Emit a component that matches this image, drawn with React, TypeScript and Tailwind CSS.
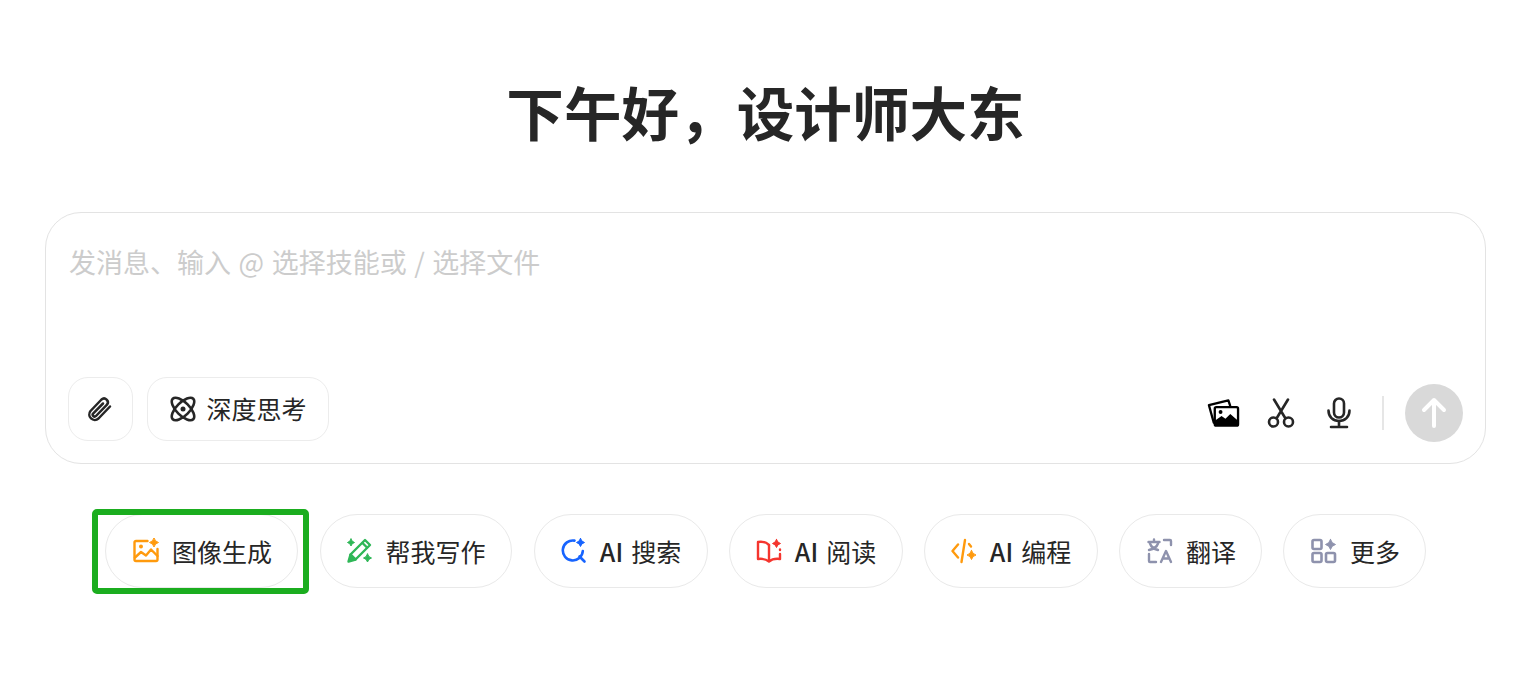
import React from 'react';

const font = { fontFamily: '"Noto Sans CJK SC", "Noto Sans", sans-serif' };

const Spark = ({ x, y, r, fill }: { x: number; y: number; r: number; fill: string }) => (
  <path
    d={`M${x} ${y - r}Q${x + r * 0.2} ${y - r * 0.2} ${x + r} ${y}Q${x + r * 0.2} ${y + r * 0.2} ${x} ${y + r}Q${x - r * 0.2} ${y + r * 0.2} ${x - r} ${y}Q${x - r * 0.2} ${y - r * 0.2} ${x} ${y - r}Z`}
    fill={fill}
    stroke={fill}
    strokeWidth="1"
    strokeLinejoin="round"
  />
);

const ImageIcon = () => (
  <svg width="26" height="26" viewBox="0 0 26 26" fill="none" stroke="#ff9a0d" strokeWidth="2.400" strokeLinecap="round" strokeLinejoin="round">
    <path d="M14.500 3H3a1.500 1.500 0 0 0-1.500 1.500v17A1.500 1.500 0 0 0 3 23h20a1.500 1.500 0 0 0 1.500-1.500V11" />
    <path d="M2 19.500l6-5.500 5 3.500 5-6 6.500 6.500" />
    <circle cx="8" cy="8.500" r="2" fill="#ff9a0d" stroke="none" />
    <Spark x={21} y={4.500} r={4.500} fill="#ff9a0d" />
  </svg>
);

const PenIcon = () => (
  <svg width="26" height="26" viewBox="0 0 26 26" fill="none" stroke="#2fb757" strokeWidth="2.400" strokeLinecap="round" strokeLinejoin="round">
    <path d="M19 2l5 5L9.500 21.500 4.500 16.500z" />
    <path d="M4.500 16.500L2.500 23.500l7-2z" fill="#2fb757" />
    <path d="M16.500 5L21 9.500" />
    <Spark x={5} y={4.500} r={3.500} fill="#2fb757" />
    <Spark x={21.500} y={20} r={4} fill="#2fb757" />
  </svg>
);

const SearchIcon = () => (
  <svg width="26" height="26" viewBox="0 0 26 26" fill="none" stroke="#1764ff" strokeWidth="2.600" strokeLinecap="round" strokeLinejoin="round">
    <path d="M13.500 2.600A10 10 0 1 0 21.800 13" />
    <path d="M18.500 18.500l5 5" />
    <Spark x={19.500} y={4.500} r={4} fill="#1764ff" />
  </svg>
);

const BookIcon = () => (
  <svg width="26" height="26" viewBox="0 0 26 26" fill="none" stroke="#f5352e" strokeWidth="2.400" strokeLinecap="round" strokeLinejoin="round">
    <path d="M13 7C11 4.500 6 3.500 2 4v17c4-.5 8 0 11 2.500 3-2.500 7-3 11-2.500v-5" />
    <path d="M13 7v15" />
    <Spark x={20.500} y={5.500} r={4} fill="#f5352e" />
    <path d="M24 11.500v.5" />
  </svg>
);

const CodeIcon = () => (
  <svg width="26" height="26" viewBox="0 0 26 26" fill="none" stroke="#ff9a0d" strokeWidth="2.400" strokeLinecap="round" strokeLinejoin="round">
    <path d="M7 6.500L1.500 13 7 19.500" />
    <path d="M14 2l-3.500 22" />
    <path d="M18 6l2 2.500" />
    <Spark x={20.500} y={17} r={4.500} fill="#ff9a0d" />
  </svg>
);

const TranslateIcon = () => (
  <svg width="26" height="26" viewBox="0 0 26 26" fill="none" stroke="#8e92ad" strokeWidth="2.400" strokeLinecap="round" strokeLinejoin="round">
    <path d="M1.500 4h11M7 1.500V4" />
    <path d="M3 5.500c1 3 4 5.500 8 6.500M11 5.500c-1 3-4 5.500-9 6.500" />
    <path d="M17 2h6a1 1 0 0 1 1 1v4" />
    <path d="M2 16v7a1 1 0 0 0 1 1h6" />
    <path d="M14 24l5-11 5 11M15.800 20.500h6.400" />
  </svg>
);

const GridIcon = () => (
  <svg width="26" height="26" viewBox="0 0 26 26" fill="none" stroke="#8e92ad" strokeWidth="2.600" strokeLinecap="round" strokeLinejoin="round">
    <rect x="1.500" y="2" width="9" height="9" rx="1.500" />
    <rect x="1.500" y="15" width="9" height="9" rx="1.500" />
    <rect x="15" y="15" width="9" height="9" rx="1.500" />
    <Spark x={19.500} y={6.500} r={5} fill="#8e92ad" />
  </svg>
);

const Chip = ({ icon, width, children }: { icon: React.ReactNode; width: string; children: React.ReactNode }) => (
  <button className={`flex h-[74px] items-center justify-center gap-[13px] rounded-full border border-[#e9e9e9] bg-white text-[25px] text-[#262626] ${width}`}>
    {icon}
    <span className="whitespace-nowrap pt-[1px]">{children}</span>
  </button>
);

const Ai = () => <span className="mr-[8px] font-medium">AI</span>;

export default function App() {
  return (
    <div className="relative min-h-[684px] bg-white pl-[45px] pr-[42px] pt-[70px]" style={font}>
      {/* Greeting */}
      <h1 className="h-[82px] text-center text-[57.600px] font-bold leading-[82px] text-[#262626]">下午好，设计师大东</h1>

      {/* Composer */}
      <div className="mt-[60px] flex h-[252px] flex-col justify-between rounded-[36px] border border-[#e3e3e3] bg-white pb-[21px] pl-[22px] pr-[22px] pt-[29px]">
        <p className="ml-px text-[27px] leading-[40px] text-[#cccccc] [word-spacing:1.500px]">发消息、输入 @ 选择技能或 / 选择文件</p>
        <div className="flex items-start justify-between">
          <div className="flex items-center gap-[14px]">
            <button className="flex h-[64px] w-[65px] items-center justify-center rounded-[20px] border border-[#ececec] pr-[3px]">
              <svg width="28" height="28" viewBox="0 0 28 28" fill="none" stroke="#262626" strokeWidth="2.500" strokeLinecap="round" strokeLinejoin="round">
                <path d="M25 11.500L13.500 23.500a5.500 5.500 0 0 1-8-7.500L16.500 4.500a3.800 3.800 0 0 1 5.500 5.200L11 21a1.900 1.900 0 0 1-2.700-2.700L18 8.500" />
              </svg>
            </button>
            <button className="flex h-[64px] w-[182px] items-center justify-center gap-[9px] rounded-[20px] border border-[#ececec] text-[25px] text-[#262626]">
              <svg width="28" height="28" viewBox="0 0 28 28" fill="none" stroke="#262626" strokeWidth="2.600" strokeLinejoin="round">
                <ellipse cx="14" cy="14" rx="14.500" ry="6.500" transform="rotate(45 14 14)" />
                <ellipse cx="14" cy="14" rx="14.500" ry="6.500" transform="rotate(-45 14 14)" />
                <circle cx="14" cy="14" r="2.500" fill="#262626" stroke="none" />
              </svg>
              <span className="whitespace-nowrap">深度思考</span>
            </button>
          </div>
          <div className="mt-[7px] flex items-center">
            <svg width="33" height="32" viewBox="0 0 34 32" fill="none" stroke="#000" strokeWidth="2.400" strokeLinejoin="round">
              <path d="M9 26H7L2 8l20-5 2 6" />
              <rect x="8" y="10" width="24" height="19" rx="1.500" fill="#fff" />
              <path d="M8 29v-5l7-5 4 3 5-5 8 7v5z" fill="#000" stroke="none" />
              <circle cx="14" cy="15" r="2" fill="#000" stroke="none" />
            </svg>
            <svg className="ml-[27px]" width="28" height="30" viewBox="0 0 28 30" fill="none" stroke="#262626" strokeWidth="2.600" strokeLinecap="round">
              <path d="M7 1.500l11.500 19M21 1.500L9.500 20.500" />
              <circle cx="6.500" cy="24" r="4.500" />
              <circle cx="21.500" cy="24" r="4.500" />
            </svg>
            <svg className="ml-[31px]" width="26" height="32" viewBox="0 0 26 32" fill="none" stroke="#262626" strokeWidth="2.600" strokeLinecap="round">
              <rect x="8" y="1.500" width="10" height="19" rx="5" />
              <path d="M2.500 13.500c0 6.500 4.500 10.500 10.500 10.500s10.500-4 10.500-10.500" />
              <path d="M13 24v5.500M5 30h16" />
            </svg>
            <div className="ml-[30px] h-[34px] w-[2px] bg-[#e6e6e6]" />
            <button className="ml-[21px] flex h-[58px] w-[58px] items-center justify-center rounded-full bg-[#d9d9d9]">
              <svg width="30" height="32" viewBox="0 0 30 32" fill="none" stroke="#fff" strokeWidth="4" strokeLinecap="round" strokeLinejoin="round">
                <path d="M15 29V3M5 13L15 3l10 10" />
              </svg>
            </button>
          </div>
        </div>
      </div>

      {/* Shortcuts */}
      <div className="mt-[50px] flex justify-center gap-[21px]">
        <Chip icon={<ImageIcon />} width="mr-px w-[193px] pl-[2px]">图像生成</Chip>
        <Chip icon={<PenIcon />} width="mr-px w-[192px]">帮我写作</Chip>
        <Chip icon={<SearchIcon />} width="w-[174px]"><Ai />搜索</Chip>
        <Chip icon={<BookIcon />} width="w-[174px]"><Ai />阅读</Chip>
        <Chip icon={<CodeIcon />} width="w-[174px]"><Ai />编程</Chip>
        <Chip icon={<TranslateIcon />} width="w-[143px] pl-[2px]">翻译</Chip>
        <Chip icon={<GridIcon />} width="w-[143px] pl-[2px]">更多</Chip>
      </div>

      {/* Green annotation box */}
      <div className="pointer-events-none absolute left-[92px] top-[509px] h-[85px] w-[217px] rounded-[5px] border-[6px] border-[#1bad1f]" />
    </div>
  );
}
